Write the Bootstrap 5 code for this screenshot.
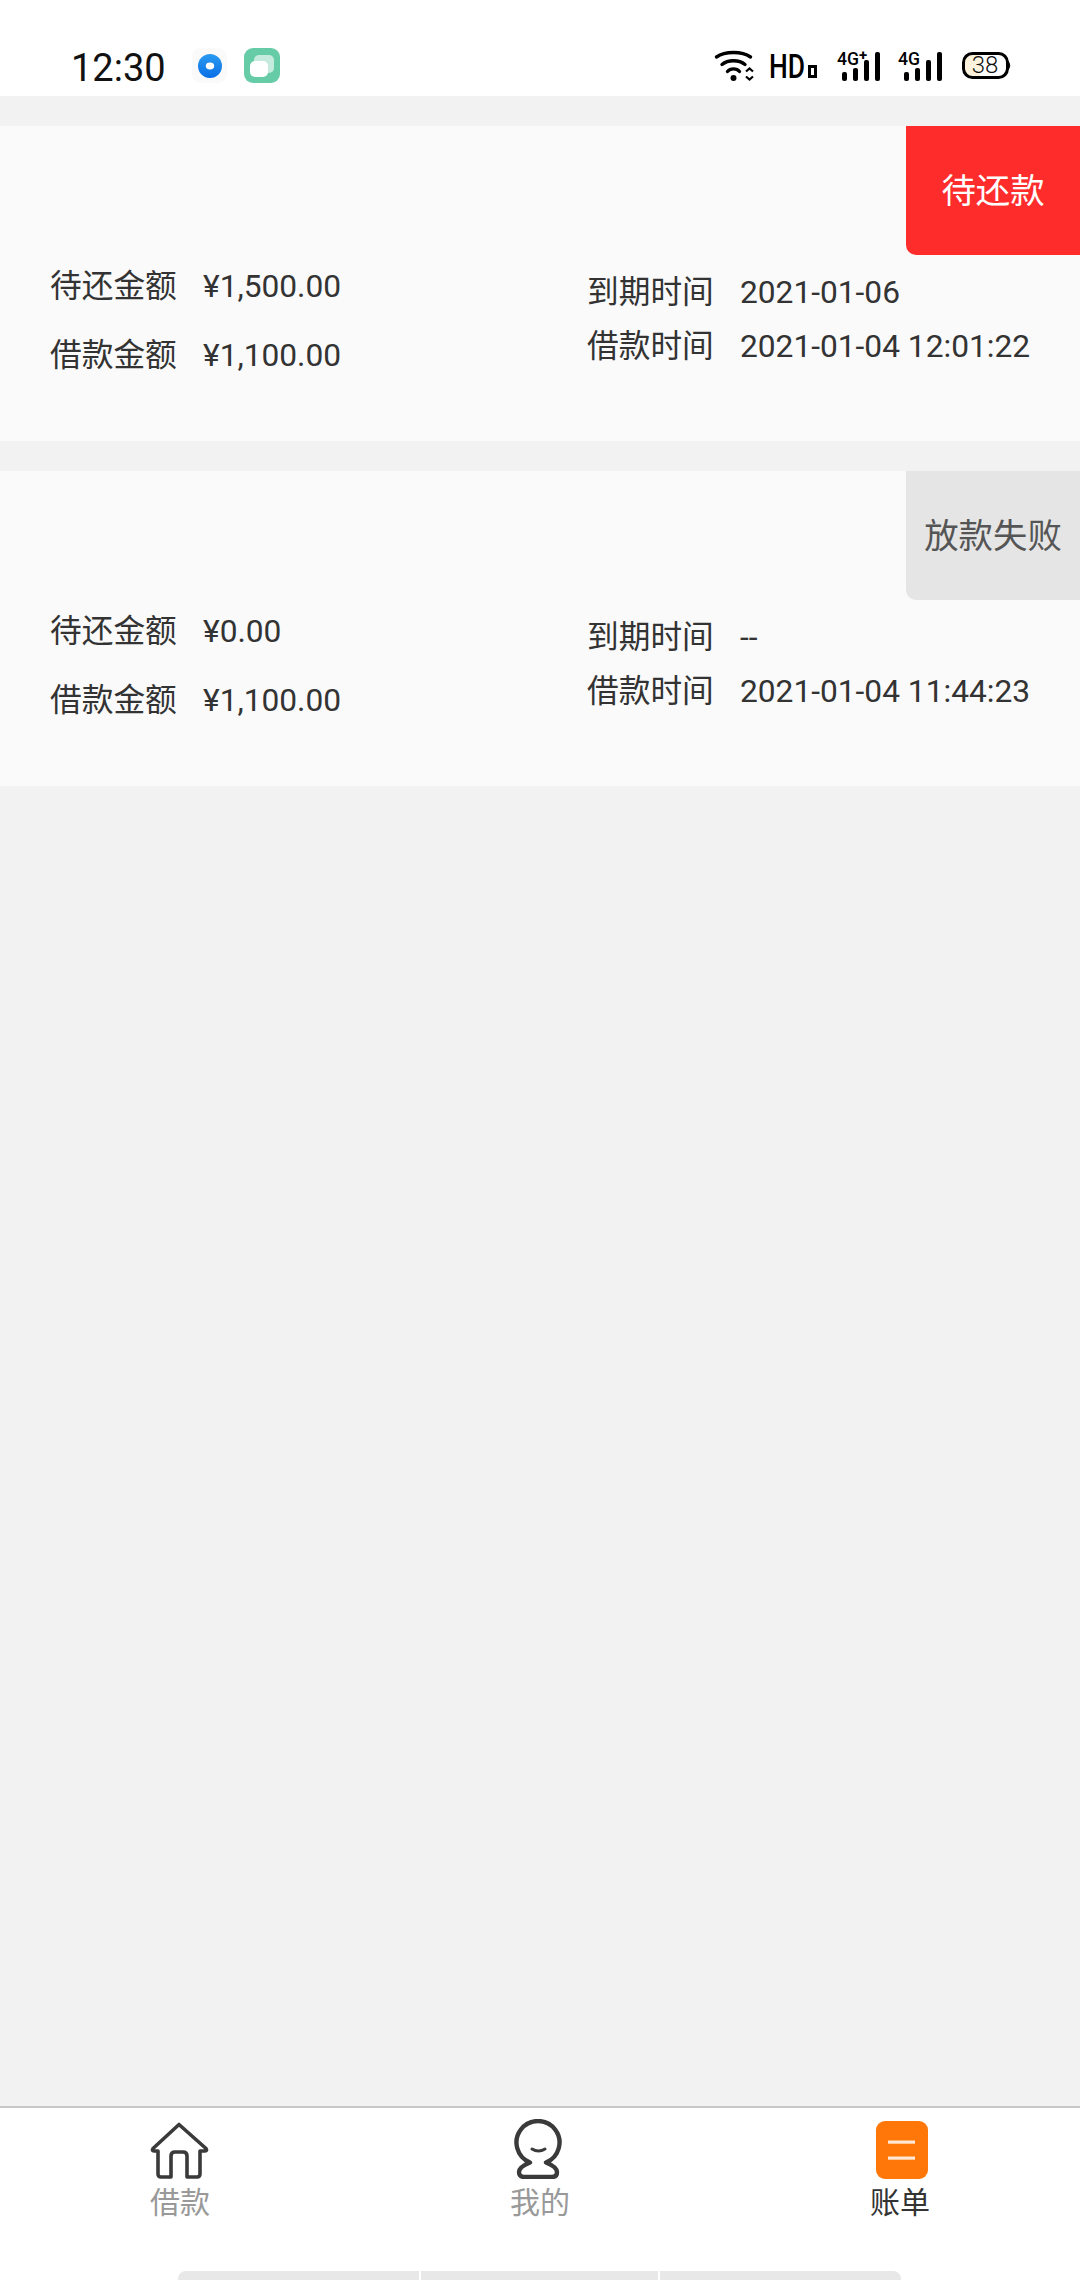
<!DOCTYPE html>
<html lang="zh">
<head>
<meta charset="utf-8">
<title>账单</title>
<link href="https://cdn.jsdelivr.net/npm/bootstrap@5.3.0/dist/css/bootstrap.min.css" rel="stylesheet">
<style>
html,body{margin:0;background:#f2f2f2}
body{width:1080px;height:2280px;font-family:Roboto,"Noto Sans CJK SC",sans-serif;color:#333;overflow:hidden}
.shell{height:2280px}
.status-strip{height:96px;background:#fff;padding:48px 0 0 71px}
.clock{width:121px;font-size:38px;line-height:40px;color:#111;font-weight:400}
.app-blue{width:35px;height:35px;border-radius:9px;background:#fafafa}
.app-green{width:36px;height:35px;margin-left:17px}
.status-right{margin-left:auto;margin-right:69px;height:35px}
.status-right svg{overflow:visible}
.gap-a{margin-left:14px}
.gap-b{margin-left:20px}
.gap-c{margin-left:18px}
.feed{padding-top:30px;gap:30px}
.bill-card{height:315px;background:#fafafa;font-size:31.7px;line-height:40px}
.tag{width:174px;height:129px;border-bottom-left-radius:10px;font-size:34.4px}
.tag-due{background:#ff2c2c;color:#fff}
.tag-fail{background:#e5e5e5;color:#555}
.col-left{width:587px;padding:12px 0 0 50px;gap:29px}
.col-right{padding:18px 0 0 0;gap:14px}
.key{width:153px}
.tabbar{height:174px;background:#fff;border-top:2px solid #c8c8c8;position:relative}
.tab-item{width:360px;padding-top:11px;font-size:30px;line-height:36px;color:#999}
.tab-item.on{color:#333}
.tab-ico{height:60px;margin-bottom:6px}
.ico-bill{margin-left:3px}
.home-bar{position:absolute;left:178px;bottom:0;gap:2px}
.home-bar i{display:block;height:9px;background:#e8e8e8}
.seg-a{width:241px;border-top-left-radius:8px}
.seg-b{width:237px}
.seg-c{width:241px;border-top-right-radius:8px}
</style>
</head>
<body>
<div class="shell d-flex flex-column">
  <div class="status-strip d-flex align-items-start flex-shrink-0">
    <div class="clock">12:30</div>
    <div class="app-blue d-flex align-items-center justify-content-center">
      <svg width="26" height="26" viewBox="0 0 26 26"><defs><linearGradient id="bl" x1="0" y1="0" x2="0" y2="1"><stop offset="0" stop-color="#2a9bf0"/><stop offset="1" stop-color="#0a6fe6"/></linearGradient></defs><ellipse cx="13" cy="13" rx="12" ry="12" fill="url(#bl)"/><ellipse cx="13" cy="13" rx="4.2" ry="3.4" fill="#fff"/></svg>
    </div>
    <svg class="app-green" viewBox="0 0 36 35"><rect width="36" height="35" rx="9" fill="#66cca8"/><rect x="10" y="7" width="20" height="18" rx="5" fill="#c4ebdd"/><rect x="6" y="13" width="18" height="16" rx="5" fill="#fff"/></svg>
    <div class="status-right d-flex align-items-start">
      <svg width="40" height="35" viewBox="0 0 40 35"><g fill="none" stroke="#000" stroke-width="3.4" stroke-linecap="round"><path d="M1.5 9C10 3 27 3 35.5 9"/><path d="M7 16.5C13 11.5 24 11.5 30 16.5"/><path d="M12.5 23.5C15.5 20 21.5 20 24.5 23.5"/></g><circle cx="18.5" cy="30" r="3" fill="#000"/><path d="M31 23.5l3.5-3 3.5 3M31 28.5l3.5 3 3.5-3" fill="none" stroke="#000" stroke-width="2.2"/></svg>
      <svg class="gap-a" width="48" height="35" viewBox="0 0 48 35"><text x="0" y="30" font-family="Roboto,sans-serif" font-size="33" font-weight="500" textLength="36" lengthAdjust="spacingAndGlyphs" fill="#000">HD</text><rect x="39" y="17" width="9" height="13" fill="#000"/><rect x="42" y="20" width="3" height="7" fill="#fff"/></svg>
      <svg class="gap-b" width="43" height="35" viewBox="0 0 43 35"><text x="0" y="17" font-family="Roboto,sans-serif" font-size="19" font-weight="500" textLength="22" lengthAdjust="spacingAndGlyphs" fill="#000">4G</text><text x="22" y="12" font-family="Roboto,sans-serif" font-size="15" font-weight="700" fill="#000">+</text><g fill="#000"><rect x="5" y="24" width="5" height="9" rx="2"/><rect x="16" y="20" width="5" height="13" rx="2"/><rect x="27" y="12" width="5" height="21" rx="2"/><rect x="38" y="4" width="5" height="29" rx="2"/></g></svg>
      <svg class="gap-c" width="44" height="35" viewBox="0 0 44 35"><text x="0" y="17" font-family="Roboto,sans-serif" font-size="19" font-weight="500" textLength="22" lengthAdjust="spacingAndGlyphs" fill="#000">4G</text><g fill="#000"><rect x="6" y="24" width="5" height="9" rx="2"/><rect x="17" y="20" width="5" height="13" rx="2"/><rect x="28" y="12" width="5" height="21" rx="2"/><rect x="39" y="4" width="5" height="29" rx="2"/></g></svg>
      <svg class="gap-b" width="49" height="35" viewBox="0 0 49 35"><path d="M10 6H18V29H10A8 8 0 0 1 3 22V13A8 8 0 0 1 10 6Z" fill="#fdf3dc"/><rect x="1.5" y="5.5" width="44" height="24" rx="9" fill="none" stroke="#000" stroke-width="3"/><path d="M46.5 13.5q2.5 4 0 8z" fill="#000" stroke="#000" stroke-width="1"/><text x="23" y="25" text-anchor="middle" font-family="Roboto,sans-serif" font-size="24" font-weight="300" fill="#111">38</text></svg>
    </div>
  </div>

  <div class="feed d-flex flex-column flex-grow-1">
    <div class="bill-card">
      <div class="d-flex justify-content-end"><div class="tag tag-due d-flex align-items-center justify-content-center">待还款</div></div>
      <div class="d-flex">
        <div class="col-left d-flex flex-column flex-shrink-0">
          <div class="d-flex"><span class="key">待还金额</span><span>¥1,500.00</span></div>
          <div class="d-flex"><span class="key">借款金额</span><span>¥1,100.00</span></div>
        </div>
        <div class="col-right d-flex flex-column">
          <div class="d-flex"><span class="key">到期时间</span><span>2021-01-06</span></div>
          <div class="d-flex"><span class="key">借款时间</span><span>2021-01-04 12:01:22</span></div>
        </div>
      </div>
    </div>
    <div class="bill-card">
      <div class="d-flex justify-content-end"><div class="tag tag-fail d-flex align-items-center justify-content-center">放款失败</div></div>
      <div class="d-flex">
        <div class="col-left d-flex flex-column flex-shrink-0">
          <div class="d-flex"><span class="key">待还金额</span><span>¥0.00</span></div>
          <div class="d-flex"><span class="key">借款金额</span><span>¥1,100.00</span></div>
        </div>
        <div class="col-right d-flex flex-column">
          <div class="d-flex"><span class="key">到期时间</span><span>--</span></div>
          <div class="d-flex"><span class="key">借款时间</span><span>2021-01-04 11:44:23</span></div>
        </div>
      </div>
    </div>
  </div>

  <div class="tabbar d-flex flex-shrink-0">
    <div class="tab-item d-flex flex-column align-items-center">
      <svg class="tab-ico" width="60" height="60" viewBox="0 0 60 60"><path d="M29 5.5L56 29.5Q57.5 32 55 32H50V55Q50 58 47 58H37V37Q37 33 33 33H25Q21 33 21 37V58H11Q8 58 8 55V32H4Q1.5 32 3 29.5Z" fill="none" stroke="#3a3a3a" stroke-width="3.6" stroke-linejoin="round"/></svg>
      借款
    </div>
    <div class="tab-item d-flex flex-column align-items-center">
      <svg class="tab-ico" width="60" height="60" viewBox="0 0 60 60"><path d="M20 43.5A21.5 21.5 0 1 1 36 43.5Q47 48 47 53Q47 58 42 58H14Q9 58 9 53Q9 48 20 43.5Z" fill="none" stroke="#3a3a3a" stroke-width="4.4" stroke-linejoin="round"/><path d="M22 30Q28.5 34 35 30" fill="none" stroke="#3a3a3a" stroke-width="3" stroke-linecap="round"/></svg>
      我的
    </div>
    <div class="tab-item on d-flex flex-column align-items-center">
      <svg class="tab-ico ico-bill" width="52" height="60" viewBox="0 0 52 60"><rect x="0" y="2" width="52" height="58" rx="9" fill="#ff7708"/><rect x="12" y="21.5" width="27" height="3.2" fill="#ffe9d6"/><rect x="12" y="37.5" width="27" height="3.2" fill="#ffe9d6"/></svg>
      账单
    </div>
    <div class="home-bar d-flex"><i class="seg-a"></i><i class="seg-b"></i><i class="seg-c"></i></div>
  </div>
</div>
<script src="https://cdn.jsdelivr.net/npm/bootstrap@5.3.0/dist/js/bootstrap.bundle.min.js"></script>
</body>
</html>
